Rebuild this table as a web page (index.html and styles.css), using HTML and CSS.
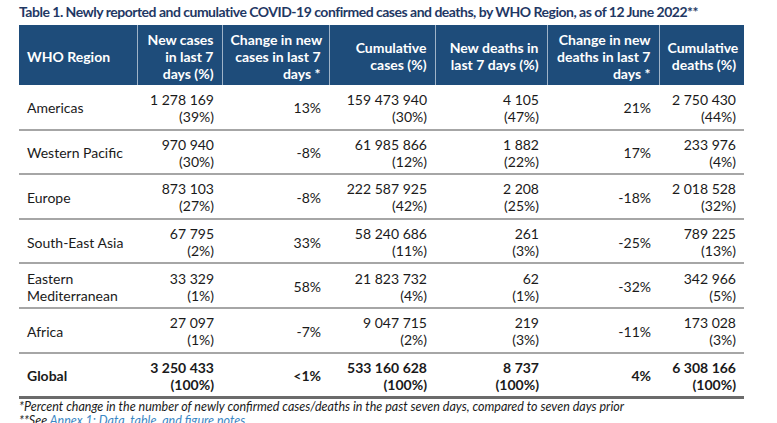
FILE: index.html
```html
<!DOCTYPE html>
<html>
<head>
<meta charset="utf-8">
<link rel="stylesheet" href="styles.css">
</head>
<body>
<div class="page">
  <h1 class="title">Table 1. Newly reported and cumulative COVID-19 confirmed cases and deaths, by WHO Region, as of 12 June 2022**</h1>
  <table class="data">
    <colgroup>
      <col class="c1"><col class="c2"><col class="c3"><col class="c4"><col class="c5"><col class="c6"><col class="c7">
    </colgroup>
    <thead>
      <tr>
        <th class="left">WHO Region</th>
        <th>New cases<br>in last 7<br>days (%)</th>
        <th>Change in new<br>cases in last 7<br>days *</th>
        <th>Cumulative<br>cases (%)</th>
        <th>New deaths in<br>last 7 days (%)</th>
        <th>Change in new<br>deaths in last 7<br>days *</th>
        <th>Cumulative<br>deaths (%)</th>
      </tr>
    </thead>
    <tbody>
      <tr>
        <td class="left">Americas</td>
        <td>1 278 169<br>(39%)</td><td>13%</td><td>159 473 940<br>(30%)</td><td>4 105<br>(47%)</td><td>21%</td><td>2 750 430<br>(44%)</td>
      </tr>
      <tr>
        <td class="left">Western Pacific</td>
        <td>970 940<br>(30%)</td><td>-8%</td><td>61 985 866<br>(12%)</td><td>1 882<br>(22%)</td><td>17%</td><td>233 976<br>(4%)</td>
      </tr>
      <tr>
        <td class="left">Europe</td>
        <td>873 103<br>(27%)</td><td>-8%</td><td>222 587 925<br>(42%)</td><td>2 208<br>(25%)</td><td>-18%</td><td>2 018 528<br>(32%)</td>
      </tr>
      <tr>
        <td class="left">South-East Asia</td>
        <td>67 795<br>(2%)</td><td>33%</td><td>58 240 686<br>(11%)</td><td>261<br>(3%)</td><td>-25%</td><td>789 225<br>(13%)</td>
      </tr>
      <tr>
        <td class="left">Eastern<br>Mediterranean</td>
        <td>33 329<br>(1%)</td><td>58%</td><td>21 823 732<br>(4%)</td><td>62<br>(1%)</td><td>-32%</td><td>342 966<br>(5%)</td>
      </tr>
      <tr>
        <td class="left">Africa</td>
        <td>27 097<br>(1%)</td><td>-7%</td><td>9 047 715<br>(2%)</td><td>219<br>(3%)</td><td>-11%</td><td>173 028<br>(3%)</td>
      </tr>
      <tr class="total">
        <td class="left">Global</td>
        <td>3 250 433<br>(100%)</td><td>&lt;1%</td><td>533 160 628<br>(100%)</td><td>8 737<br>(100%)</td><td>4%</td><td>6 308 166<br>(100%)</td>
      </tr>
    </tbody>
  </table>
  <p class="note">*Percent change in the number of newly confirmed cases/deaths in the past seven days, compared to seven days prior</p>
  <p class="note">**See <span class="link">Annex 1: Data, table, and figure notes</span></p>
</div>
</body>
</html>
```
FILE: styles.css
```css
html, body {
  margin: 0;
  padding: 0;
  background: #ffffff;
}
.page {
  padding: 3px 0 0 19px;
  font-family: Lato, "Noto Sans", sans-serif;
  color: #1a1a1a;
}
.title {
  margin: 0 0 4px 0;
  font-size: 14px;
  line-height: 18px;
  font-weight: 700;
  color: #1f3864;
  white-space: nowrap;
  letter-spacing: -0.5px;
}
.data {
  border-collapse: collapse;
  width: 725px;
  table-layout: fixed;
  font-size: 14px;
}
.c1 { width: 118px; }
.c2 { width: 85px; }
.c3 { width: 107px; }
.c4 { width: 106px; }
.c5 { width: 112px; }
.c6 { width: 112px; }
.c7 { width: 85px; }
.data th {
  background: #1e4c7a;
  color: #ffffff;
  font-weight: 700;
  text-align: right;
  vertical-align: middle;
  height: 60px;
  padding: 2px 8px 0 8px;
  line-height: 17px;
  border-left: 1px solid #9fb3c8;
  box-sizing: border-box;
  white-space: nowrap;
}
.data th:first-child {
  border-left: none;
}
.data th.left {
  text-align: left;
}
.data td {
  text-align: right;
  vertical-align: middle;
  height: 44.6px;
  padding: 2px 8px 0 8px;
  line-height: 17px;
  border-bottom: 2px solid #a6a6a6;
  box-sizing: border-box;
  white-space: nowrap;
}
.data td.left {
  text-align: left;
}
.data tr.total td {
  font-weight: 700;
  border-bottom: 3px solid #6b6b6b;
}
.note {
  margin: 0;
  font-size: 12.5px;
  line-height: 14px;
  font-style: italic;
  color: #1a1a1a;
  white-space: nowrap;
}
.note:first-of-type {
  margin-top: 1px;
}
.link {
  color: #3b87c4;
}
```
